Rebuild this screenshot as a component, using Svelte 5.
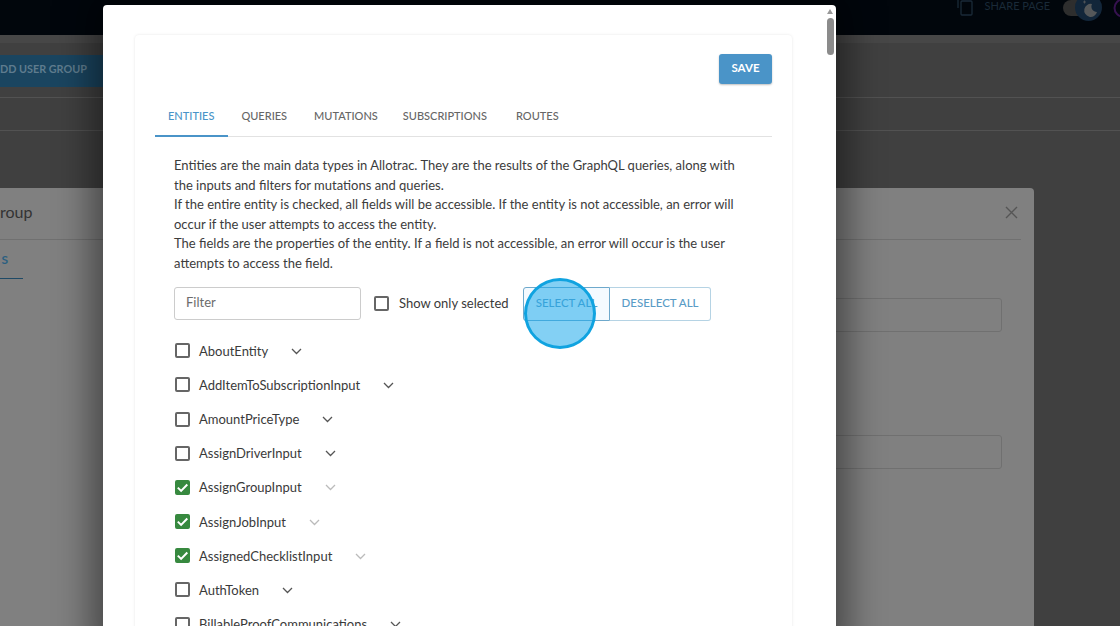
<script lang="ts">
  // Permissions dialog stacked over a dimmed user group dialog and page.
  const intro = [
    'Entities are the main data types in Allotrac. They are the results of the GraphQL queries, along with',
    'the inputs and filters for mutations and queries.',
    'If the entire entity is checked, all fields will be accessible. If the entity is not accessible, an error will',
    'occur if the user attempts to access the entity.',
    'The fields are the properties of the entity. If a field is not accessible, an error will occur is the user',
    'attempts to access the field.',
  ];
  const tabs = ['ENTITIES', 'QUERIES', 'MUTATIONS', 'SUBSCRIPTIONS', 'ROUTES'];
  const entities = [
    { name: 'AboutEntity', on: false },
    { name: 'AddItemToSubscriptionInput', on: false },
    { name: 'AmountPriceType', on: false },
    { name: 'AssignDriverInput', on: false },
    { name: 'AssignGroupInput', on: true },
    { name: 'AssignJobInput', on: true },
    { name: 'AssignedChecklistInput', on: true },
    { name: 'AuthToken', on: false },
    { name: 'BillableProofCommunications', on: false },
  ];
</script>

<div class="page">
  <header class="topbar">
    <svg class="share-icon" width="18" height="16" viewBox="0 0 18 16" fill="none" stroke="#1a2a38" stroke-width="1.3">
      <path d="M1 0v8" />
      <rect x="4" y="1" width="11" height="14" rx="1" />
    </svg>
    <span class="share">SHARE PAGE</span>
    <span class="toggle">
      <span class="knob">
        <svg width="27" height="27" viewBox="0 0 27 27"><path d="M17 10a6.5 6.5 0 1 0 5 8a5.5 5.5 0 0 1-5-8z" fill="#55585a" /><path d="M8 8h3M9.5 6.5v3" stroke="#55585a" stroke-width="0.8" /></svg>
      </span>
    </span>
    <svg class="avatar" width="7" height="18" viewBox="0 0 7 18" fill="none"><circle cx="10" cy="8" r="8.5" stroke="#35124f" stroke-width="2" /></svg>
  </header>
  <div class="subbar"></div>
  <div class="add-row"><div class="add-btn">DD USER GROUP</div></div>
  <div class="rule-row"></div>

  <section class="back-dialog">
    <div class="back-head">
      <span class="back-title">roup</span>
      <svg class="close" width="13" height="13" viewBox="0 0 13 13" stroke="#555" stroke-width="1.4"><path d="M1 1l11 11M12 1L1 12" /></svg>
    </div>
    <div class="back-tab">S</div>
    <div class="back-input one"></div>
    <div class="back-input two"></div>
  </section>

  <div class="modal-shadow"></div>

  <section class="modal">
    <div class="card">
      <div class="save-row"><button class="save">SAVE</button></div>
      <nav class="tabs">
        {#each tabs as t, i}
          <span class="tab" class:active={i === 0}>{t}</span>
        {/each}
      </nav>
      <div class="body">
        <div class="intro">
          {#each intro as line}<div>{line}</div>{/each}
        </div>
        <div class="controls">
          <div class="filter">Filter</div>
          <span class="box"></span>
          <span class="only">Show only selected</span>
          <div class="group">
            <span class="seg first">SELECT ALL</span>
            <span class="seg">DESELECT ALL</span>
          </div>
        </div>
        <ul class="list">
          {#each entities as e}
            <li>
              {#if e.on}
                <span class="box on">
                  <svg width="15" height="15" viewBox="0 0 15 15" fill="none" stroke="#fff" stroke-width="2"><path d="M2.8 7.6l3.3 3.3 6.2-6.4" /></svg>
                </span>
              {:else}
                <span class="box"></span>
              {/if}
              <span class="name">{e.name}</span>
              <svg class="chev" class:dim={e.on} width="11" height="7" viewBox="0 0 11 7" fill="none" stroke="currentColor" stroke-width="1.3"><path d="M1 1l4.5 4.5L10 1" /></svg>
            </li>
          {/each}
        </ul>
      </div>
    </div>
    <div class="scrollbar">
      <span class="arrow"></span>
      <span class="thumb"></span>
    </div>
  </section>

  <!-- click highlight drawn by the screenshot tool -->
  <div class="spot"></div>
</div>

<style>
  :global(body) {
    margin: 0;
    overflow: hidden;
  }
  .page {
    position: relative;
    width: 1120px;
    height: 626px;
    overflow: hidden;
    background: #404040;
    font-family: Lato, 'Open Sans', sans-serif;
    color: #3a3a3a;
  }
  .topbar {
    height: 35px;
    background: #01060c;
    display: flex;
    justify-content: flex-end;
    align-items: flex-start;
  }
  .share-icon {
    margin-right: 9px;
  }
  .share {
    font-size: 11px;
    line-height: 12px;
    color: #1a2a38;
    margin-right: 13px;
  }
  .toggle {
    width: 27px;
    height: 16px;
    background: #2e2e2e;
    border-radius: 8px;
    position: relative;
    margin-right: 23px;
  }
  .knob {
    position: absolute;
    left: 12px;
    top: -6px;
    width: 27px;
    height: 27px;
    border-radius: 50%;
    background: #12263a;
  }
  .knob svg {
    display: block;
  }
  .avatar {
    flex: none;
  }
  .subbar {
    height: 8px;
    background: #474747;
  }
  .add-row {
    height: 55px;
    padding-top: 12px;
    box-sizing: border-box;
    border-bottom: 1px solid #525252;
  }
  .add-btn {
    width: 103px;
    height: 32px;
    background: #1a4560;
    color: #5f7c8e;
    font-size: 10.8px;
    font-weight: 700;
    line-height: 28px;
    white-space: nowrap;
  }
  .rule-row {
    height: 32px;
    border-bottom: 1px solid #525252;
  }
  .back-dialog {
    position: absolute;
    left: -20px;
    top: 188px;
    width: 1054px;
    height: 460px;
    background: #808080;
    border-radius: 4px;
  }
  .back-head {
    height: 51px;
    margin-right: 13px;
    border-bottom: 1px solid #707070;
    display: flex;
    justify-content: space-between;
    align-items: center;
    padding-right: 3px;
  }
  .back-title {
    font-size: 16px;
    color: #333;
    margin: -5px 0 0 20px;
  }
  .close {
    margin-top: -3px;
  }
  .back-tab {
    width: 43px;
    height: 39px;
    box-sizing: border-box;
    border-bottom: 1px solid #1f4a66;
    text-align: right;
    padding: 12px 15px 0 0;
    font-size: 12px;
    font-weight: 700;
    color: #2b5f80;
  }
  .back-input {
    position: absolute;
    left: 700px;
    right: 32px;
    height: 32px;
    border: 1px solid #707070;
    border-radius: 3px;
  }
  .back-input.one {
    top: 110px;
  }
  .back-input.two {
    top: 247px;
  }
  .modal-shadow {
    position: absolute;
    left: 103px;
    top: 6px;
    width: 733px;
    height: 640px;
    box-shadow: 0 0 34px 12px rgba(0, 0, 0, 0.45);
  }
  .modal {
    position: absolute;
    left: 103px;
    top: 5px;
    width: 733px;
    height: 660px;
    background: #fff;
    border-radius: 4px;
    box-sizing: border-box;
    padding: 30px 0 0 32px;
  }
  .card {
    width: 657px;
    height: 640px;
    box-sizing: border-box;
    padding: 19px 20px 0;
    border-radius: 4px;
    box-shadow: 0 0 3px rgba(0, 0, 0, 0.1);
  }
  .save-row {
    display: flex;
    justify-content: flex-end;
  }
  .save {
    width: 53px;
    height: 30px;
    padding: 0 0 4px;
    border: 0;
    border-radius: 3px;
    background: #4a94c8;
    color: #fff;
    font: 700 11.5px Lato, sans-serif;
    box-shadow: 0 1px 2px rgba(0, 0, 0, 0.25);
  }
  .tabs {
    display: flex;
    margin-top: 17px;
    height: 35px;
    border-bottom: 1px solid #e2e2e2;
  }
  .tab {
    height: 35px;
    box-sizing: border-box;
    padding: 8px 13px 0;
    font-size: 11px;
    font-weight: 500;
    color: #666;
    white-space: nowrap;
  }
  .tab:nth-child(3) {
    padding-left: 14px;
    padding-right: 12px;
  }
  .tab:last-child {
    padding-left: 16px;
  }
  .tab.active {
    color: #4a94c8;
    border-bottom: 2px solid #4a94c8;
    height: 36px;
    padding-right: 14px;
  }
  .body {
    padding: 19px 19px 0;
  }
  .intro {
    font-size: 13px;
    line-height: 19.6px;
    color: #3c3c3c;
    white-space: nowrap;
  }
  .controls {
    display: flex;
    align-items: center;
    margin-top: 13px;
    height: 34px;
  }
  .filter {
    width: 187px;
    height: 33px;
    box-sizing: border-box;
    border: 1px solid #ccc;
    border-radius: 3px;
    padding: 6px 11px;
    font-size: 13px;
    line-height: 17px;
    color: #6c6c6c;
    margin-right: 13px;
  }
  .box {
    flex: none;
    width: 15px;
    height: 15px;
    box-sizing: border-box;
    border: 2px solid #666;
    border-radius: 2px;
    display: flex;
    align-items: center;
    justify-content: center;
  }
  .box.on {
    background: #37893f;
    border-color: #37893f;
  }
  .box.on svg {
    flex: none;
    margin: -2px;
  }
  .only {
    margin: -2px 0 0 10px;
    font-size: 13px;
    white-space: nowrap;
    width: 124px;
  }
  .group {
    display: flex;
    height: 34px;
  }
  .seg {
    box-sizing: border-box;
    width: 101px;
    border: 1px solid #b5d3e4;
    border-left: 0;
    border-radius: 0 3px 3px 0;
    font-size: 11.5px;
    font-weight: 500;
    color: #5a9cc6;
    line-height: 30px;
    text-align: center;
    white-space: nowrap;
  }
  .seg.first {
    width: 87px;
    border: 1px solid #6ea9cc;
    border-radius: 3px 0 0 3px;
    background: #f4faff;
  }
  .list {
    list-style: none;
    margin: 13px 0 0;
    padding: 0;
  }
  .list li {
    height: 34.2px;
    display: flex;
    align-items: center;
  }
  .list .box {
    margin-left: 1px;
  }
  .name {
    margin-left: 9px;
    font-size: 13px;
    white-space: nowrap;
  }
  .chev {
    margin-left: 23px;
    margin-top: 1px;
    color: #555;
  }
  .chev.dim {
    color: #bbb;
  }
  .scrollbar {
    position: absolute;
    top: 0;
    right: 0;
    width: 11px;
    height: 100%;
  }
  .arrow {
    position: absolute;
    left: 2px;
    top: 4px;
    border: 3.5px solid transparent;
    border-top: 0;
    border-bottom: 5px solid #999;
  }
  .thumb {
    position: absolute;
    left: 2px;
    top: 13px;
    width: 7px;
    height: 37px;
    border-radius: 4px;
    background: #8b8b8b;
  }
  .spot {
    position: absolute;
    left: 524px;
    top: 278px;
    width: 72px;
    height: 71px;
    box-sizing: border-box;
    border: 3px solid #10a3e0;
    border-radius: 50%;
    background: rgba(30, 170, 235, 0.55);
  }
</style>
